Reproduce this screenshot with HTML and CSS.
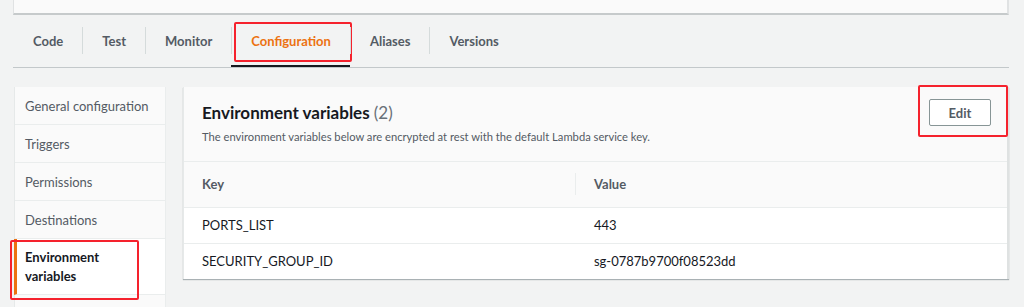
FILE: index.html
```html
<!DOCTYPE html>
<html lang="en">
  <head>
    <meta charset="UTF-8" />
    <title>Lambda configuration</title>
    <link rel="stylesheet" href="styles.css">
  </head>
  <body>
    <div class="page">
      <div class="top-card"></div>

      <div class="tabs">
        <div class="tab">Code</div>
        <div class="tab">Test</div>
        <div class="tab">Monitor</div>
        <div class="tab active marked">Configuration</div>
        <div class="tab">Aliases</div>
        <div class="tab">Versions</div>
      </div>

      <div class="config">
        <nav class="side-nav">
          <div class="side-item">General configuration</div>
          <div class="side-item">Triggers</div>
          <div class="side-item">Permissions</div>
          <div class="side-item">Destinations</div>
          <div class="side-item selected marked">Environment variables</div>
          <div class="side-item last"></div>
        </nav>

        <div class="panel">
          <div class="panel-header">
            <div class="panel-title">
              <h2>Environment variables <span class="count">(2)</span></h2>
              <p>The environment variables below are encrypted at rest with the default Lambda service key.</p>
            </div>
            <button class="edit-button marked">Edit</button>
          </div>
          <table class="vars">
            <thead>
              <tr>
                <th class="key-col">Key</th>
                <th>Value</th>
              </tr>
            </thead>
            <tbody>
              <tr>
                <td>PORTS_LIST</td>
                <td>443</td>
              </tr>
              <tr>
                <td>SECURITY_GROUP_ID</td>
                <td>sg-0787b9700f08523dd</td>
              </tr>
            </tbody>
          </table>
        </div>
      </div>
    </div>
  </body>
</html>
```

FILE: styles.css
```css
* {
  box-sizing: border-box;
  margin: 0;
  padding: 0;
}

body {
  font-family: Lato, "Liberation Sans", sans-serif;
  background-color: #f2f3f3;
  color: #16191f;
}

.page {
  width: 996px;
  margin-left: 13px;
}

.top-card {
  height: 15px;
  background-color: #fafafa;
  border-bottom: 2px solid #c6cacb;
  border-right: 2px solid #e0e2e3;
  border-left: 1px solid #e0e2e3;
}

/* tabs */

.tabs {
  display: flex;
  align-items: flex-end;
  height: 53px;
  border-bottom: 1px solid #c3c8ca;
}

.tab {
  position: relative;
  display: flex;
  align-items: center;
  height: 46px;
  padding: 0 19px 6px 20px;
  font-size: 13px;
  font-weight: 700;
  color: #545b64;
}

.tab + .tab::before {
  content: "";
  position: absolute;
  left: 0;
  top: 6px;
  height: 27px;
  width: 1px;
  background-color: #d5dbdb;
}

.tab.active {
  color: #ec7211;
  box-shadow: inset 0 -2px 0 #16191f;
}

.tab.marked::after {
  content: "";
  position: absolute;
  left: 3px;
  right: -2px;
  top: 1px;
  bottom: 5px;
  border: 2px solid #f5222d;
  border-radius: 2px;
}

/* config area */

.config {
  display: flex;
  gap: 17px;
  margin-top: 19px;
  padding-left: 1px;
}

.side-nav {
  width: 152px;
  background-color: #fafafa;
  border-right: 1px solid #eaeded;
  border-left: 1px solid #e6e9e9;
}

.side-item {
  position: relative;
  height: 38px;
  padding: 0 10px;
  display: flex;
  align-items: center;
  font-size: 13px;
  color: #545b64;
  border-bottom: 1px solid #eaeded;
}

.side-item.selected {
  height: 56px;
  padding: 0 34px 0 8px;
  background-color: #fff;
  color: #16191f;
  font-weight: 700;
  border-left: 3px solid #ec7211;
  margin-left: -1px;
  line-height: 19px;
}

.side-item.last {
  height: 12px;
  border-bottom: none;
}

.side-item.marked::after {
  content: "";
  position: absolute;
  left: -7px;
  right: 26px;
  top: 1px;
  bottom: -6px;
  border: 2px solid #f5222d;
  border-radius: 2px;
}

.panel {
  flex: 1;
  align-self: flex-start;
  background-color: #fff;
  border-left: 1px solid #e6e9e9;
  border-right: 2px solid #dfe2e2;
  box-shadow: 0 1px 1px 0 rgba(0, 28, 36, 0.3);
}

.panel-header {
  display: flex;
  justify-content: space-between;
  align-items: flex-start;
  height: 75px;
  padding: 16px 18px 0 18px;
  background-color: #fafafa;
  border-bottom: 1px solid #eaeded;
}

.panel-title h2 {
  font-size: 17px;
  font-weight: 700;
  line-height: 20px;
  color: #16191f;
}

.count {
  font-weight: 400;
  color: #687078;
}

.panel-title p {
  margin-top: 7px;
  font-size: 11.2px;
  color: #545b64;
}

.edit-button {
  position: relative;
  width: 62px;
  height: 27px;
  margin-top: -4px;
  margin-right: -2px;
  font-family: inherit;
  font-size: 13px;
  font-weight: 700;
  color: #545b64;
  background-color: #fff;
  border: 1px solid #879596;
  border-radius: 2px;
}

.edit-button.marked::after {
  content: "";
  position: absolute;
  left: -12px;
  right: -18px;
  top: -15px;
  bottom: -12px;
  border: 2px solid #f5222d;
  border-radius: 2px;
}

.vars {
  width: 100%;
  border-collapse: collapse;
  font-size: 13px;
}

.vars th {
  text-align: left;
  height: 45px;
  padding: 0 18px;
  font-weight: 700;
  color: #545b64;
  background-color: #fafafa;
  border-bottom: 1px solid #eaeded;
}

.vars th.key-col {
  width: 392px;
  position: relative;
}

.vars th.key-col::after {
  content: "";
  position: absolute;
  right: 0;
  top: 11px;
  height: 22px;
  width: 1px;
  background-color: #eaeded;
}

.vars td {
  height: 36px;
  padding: 0 18px;
  color: #16191f;
  border-bottom: 1px solid #eaeded;
}

.vars tr:last-child td {
  border-bottom: none;
}
```
